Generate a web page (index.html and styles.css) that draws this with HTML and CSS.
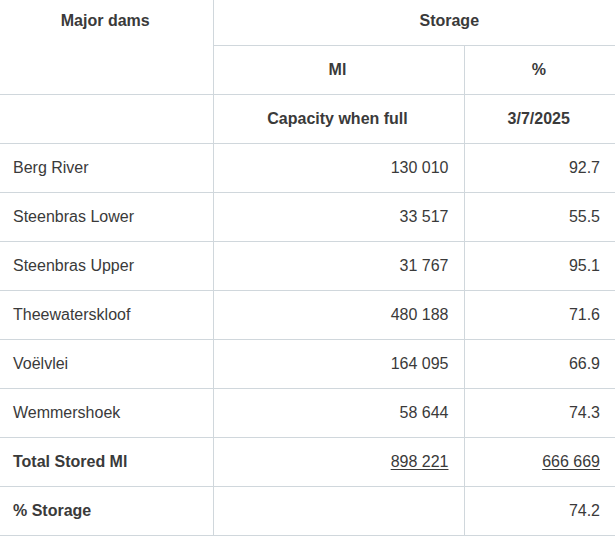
FILE: index.html
```html
<!DOCTYPE html>
<html>
<head>
<meta charset="utf-8">
<link rel="stylesheet" href="styles.css">
</head>
<body>
<table class="dams">
  <colgroup>
    <col class="c1">
    <col class="c2">
    <col class="c3">
  </colgroup>
  <thead>
    <tr class="top">
      <th rowspan="2" class="name-head">Major dams</th>
      <th colspan="2" class="storage-head">Storage</th>
    </tr>
    <tr>
      <th class="sub">Ml</th>
      <th class="sub">%</th>
    </tr>
    <tr>
      <th class="blank"></th>
      <th class="sub">Capacity when full</th>
      <th class="sub">3/7/2025</th>
    </tr>
  </thead>
  <tbody>
    <tr><td>Berg River</td><td class="num">130 010</td><td class="num">92.7</td></tr>
    <tr><td>Steenbras Lower</td><td class="num">33 517</td><td class="num">55.5</td></tr>
    <tr><td>Steenbras Upper</td><td class="num">31 767</td><td class="num">95.1</td></tr>
    <tr><td>Theewaterskloof</td><td class="num">480 188</td><td class="num">71.6</td></tr>
    <tr><td>Voëlvlei</td><td class="num">164 095</td><td class="num">66.9</td></tr>
    <tr><td>Wemmershoek</td><td class="num">58 644</td><td class="num">74.3</td></tr>
    <tr><td class="strong">Total Stored Ml</td><td class="num"><u>898 221</u></td><td class="num"><u>666 669</u></td></tr>
    <tr><td class="strong">% Storage</td><td class="num"></td><td class="num">74.2</td></tr>
  </tbody>
</table>
</body>
</html>
```
FILE: styles.css
```css
html, body {
  margin: 0;
  padding: 0;
  background: #ffffff;
}
body {
  font-family: "Liberation Sans", Arial, sans-serif;
  font-size: 16px;
  color: #3a3a3a;
}
.dams {
  width: 615px;
  border-collapse: collapse;
  table-layout: fixed;
}
.c1 { width: 213px; }
.c2 { width: 251px; }
.c3 { width: 151px; }
.dams th,
.dams td {
  line-height: 24px;
  padding: 12px 15px 12px 13px;
  border-bottom: 1px solid #d0d7dc;
  border-left: 1px solid #d0d7dc;
}
.dams th:first-child,
.dams td:first-child {
  border-left: none;
}
.dams tr > .sub:first-child {
  border-left: 1px solid #d0d7dc;
}
.dams th {
  font-weight: bold;
  text-align: center;
  color: #3a3a3a;
}
.dams .top th {
  padding-top: 9px;
  padding-bottom: 12px;
}
.name-head {
  vertical-align: top;
}
.dams .storage-head {
  padding-left: 85px;
  padding-right: 15px;
}
.dams td.num {
  text-align: right;
}
.dams td.strong {
  font-weight: bold;
}
.dams u {
  text-decoration: underline;
  text-underline-offset: 2px;
}
```
